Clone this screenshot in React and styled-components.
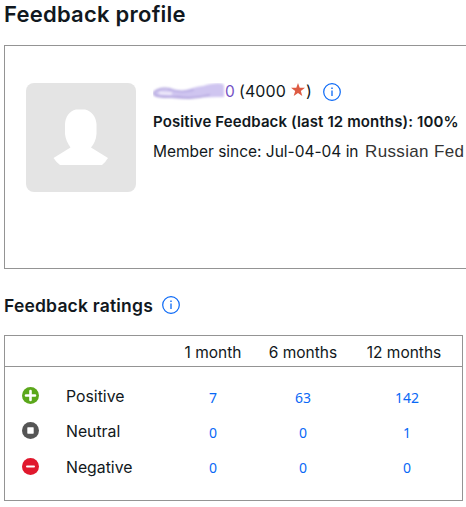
import React from "react";
import styled, { createGlobalStyle } from "styled-components";

const GlobalStyle = createGlobalStyle`
  *, *::before, *::after { box-sizing: border-box; }
  html, body { margin: 0; background: #fff; overflow: hidden; }
  body { font-family: Inter, "Liberation Sans", sans-serif; color: #111820; font-size: 16px; }
`;

const Page = styled.main`
  width: 466px;
  height: 507px;
  padding-left: 4px;
  overflow: hidden;
`;

const Title = styled.h1`
  margin: 0;
  height: 45px;
  font-size: 22px;
  line-height: 29px;
  font-weight: 600;
  letter-spacing: 0.24px;
  white-space: nowrap;
`;

const ProfileCard = styled.section`
  display: flex;
  gap: 17px;
  width: 480px;
  height: 224px;
  padding: 37px 0 0 21px;
  border: 1px solid #949494;
`;

const Avatar = styled.div`
  flex: none;
  width: 110px;
  height: 109px;
  border-radius: 8px;
  background: #e4e4e4;
  svg { display: block; }
`;

const Details = styled.div`
  display: flex;
  flex-direction: column;
  white-space: nowrap;
`;

const UserLine = styled.div`
  display: flex;
  align-items: center;
  height: 17px;
  margin-bottom: 1px;
  line-height: 17px;
  svg { display: block; flex: none; }
`;

const UserLink = styled.a`
  display: flex;
  align-items: center;
  width: 86px;
  color: #7451c4;
  font-size: 15.5px;
  letter-spacing: -0.2px;
`;

const Score = styled.span`
  width: 52px;
  letter-spacing: 0.1px;
`;

const Star = styled.svg`
  margin-top: -4px;
`;

const CloseParen = styled.span`
  width: 17px;
  margin-left: 1px;
`;

const Positive = styled.div`
  margin-top: 11px;
  height: 20px;
  line-height: 20px;
  font-size: 15px;
  font-weight: 600;
  letter-spacing: 0.12px;
`;

const Member = styled.div`
  display: flex;
  margin-top: 10px;
  height: 20px;
  line-height: 20px;
`;

const Since = styled.span`
  width: 212px;
  font-size: 15.5px;
  letter-spacing: -0.02px;
`;

const Country = styled.span`
  font-family: "Liberation Sans", Arial, sans-serif;
  font-size: 17px;
  line-height: 19px;
  color: #333;
  letter-spacing: 0.35px;
`;

const RatingsHeading = styled.h2`
  display: flex;
  align-items: center;
  gap: 9px;
  height: 66px;
  margin: 0;
  padding-top: 7px;
  font-size: 17.5px;
  font-weight: 600;
  letter-spacing: 0.19px;
  svg { display: block; margin-top: -2px; }
`;

const Ratings = styled.section`
  width: 459px;
  height: 166px;
  border: 1px solid #949494;
`;

const Row = styled.div`
  display: grid;
  grid-template-columns: 61px 102px 90px 90px 118px;
  align-items: center;
  height: 35px;
  line-height: 20px;
`;

const HeaderRow = styled(Row)`
  grid-template-columns: 61px 102px 90px 90px 112px;
  height: 31px;
  margin-bottom: 12px;
  border-bottom: 1px solid #949494;
  padding-top: 3px;
  font-size: 15.5px;
`;

const Month = styled.span`
  text-align: center;
  white-space: nowrap;
`;

const Label = styled.span`
  padding-top: ${(p) => (p.$lowered ? "2px" : "0")};
  font-size: 15.8px;
`;

const Count = styled.a`
  padding-top: 2px;
  text-align: center;
  color: #0968f6;
  font-family: "Noto Sans", sans-serif;
  font-size: 14px;
`;

const Info = () => (
  <svg width="18" height="18" viewBox="0 0 18 18" fill="none" stroke="#0968f6">
    <circle cx="9" cy="9" r="8.3" strokeWidth="1.2" />
    <path d="M9 7.6V13" strokeWidth="1.3" />
    <path d="M9 4.5V6" strokeWidth="1.4" />
  </svg>
);

const Scribble = () => (
  <svg width="72" height="18" viewBox="0 0 72 18">
    <defs>
      <filter id="soft" x="-10%" y="-20%" width="120%" height="140%">
        <feGaussianBlur stdDeviation="0.9" />
      </filter>
    </defs>
    <g filter="url(#soft)" strokeLinecap="round" strokeLinejoin="round">
      <path d="M2 9C7 5 14 6 22 8C32 9 43 3 50 3C60 0 71 -1 71 3V14C61 14 51 14 41 15C29 17 19 15 12 14C5 14 0 12 2 9Z" fill="#cfc5f0" />
      <path d="M17 6C8 4 0 8 1 11C3 15 16 14 25 14C36 16 46 15 56 12" fill="none" stroke="#b3a6de" strokeWidth="1.8" />
      <path d="M16 6C24 9 32 9 40 7" fill="none" stroke="#baaee4" strokeWidth="2" />
      <path d="M7 10L18 10.5" stroke="#f3effc" strokeWidth="2.4" />
    </g>
  </svg>
);

const StatusSvg = styled.svg`
  display: block;
  margin: ${(p) => (p.$lowered ? "-1px" : "-3px")} 0 0 17px;
`;

const StatusIcon = ({ type }) => (
  <StatusSvg $lowered={type === "Negative"} width="17" height="17" viewBox="0 0 17 17">
    <circle cx="8.5" cy="8.5" r="8.5" fill={{ Positive: "#5ba71b", Neutral: "#555", Negative: "#e0182d" }[type]} />
    {type === "Positive" && <path d="M8.5 4V13M4 8.5H13" stroke="#fff" strokeWidth="2.6" strokeLinecap="round" />}
    {type === "Neutral" && <rect x="5.3" y="5.3" width="6.4" height="6.4" rx=".6" fill="#fff" />}
    {type === "Negative" && <path d="M5 8.5H12" stroke="#fff" strokeWidth="2" strokeLinecap="round" />}
  </StatusSvg>
);

const rows = [
  ["Positive", 7, 63, 142],
  ["Neutral", 0, 0, 1],
  ["Negative", 0, 0, 0],
];

export default function App() {
  return (
    <Page>
      <GlobalStyle />
      <Title>Feedback profile</Title>
      <ProfileCard>
        <Avatar>
          <svg width="110" height="109" viewBox="0 0 110 109">
            <path d="M50 26.5H59C66 28 70 34 70.5 41V51C70 57 68 61 65 64.5L82 75Q79 80 76 82H34Q30 79 27.5 75L44.5 64.5C41.5 60 39.5 56 39 51V41C39.5 34 43 28 50 26.5Z" fill="#fff" />
          </svg>
        </Avatar>
        <Details>
          <UserLine>
            <UserLink><Scribble />0</UserLink>
            <Score>(4000</Score>
            <Star width="14" height="14" viewBox="0 0 14 14">
              <path d="M7 0L8.7 4.8H14L9.8 8L11.3 13L7 10L2.7 13L4.2 8L0 4.8H5.3Z" fill="#dd5b43" />
            </Star>
            <CloseParen>)</CloseParen>
            <Info />
          </UserLine>
          <Positive>Positive Feedback (last 12 months): 100%</Positive>
          <Member><Since>Member since: Jul-04-04 in</Since><Country>Russian Fed</Country></Member>
        </Details>
      </ProfileCard>
      <RatingsHeading>Feedback ratings <Info /></RatingsHeading>
      <Ratings>
        <HeaderRow>
          <span /><span /><Month>1 month</Month><Month>6 months</Month><Month>12 months</Month>
        </HeaderRow>
        {rows.map(([label, ...counts]) => (
          <Row key={label}>
            <StatusIcon type={label} />
            <Label $lowered={label === "Negative"}>{label}</Label>
            {counts.map((n, i) => <Count key={i}>{n}</Count>)}
          </Row>
        ))}
      </Ratings>
    </Page>
  );
}
